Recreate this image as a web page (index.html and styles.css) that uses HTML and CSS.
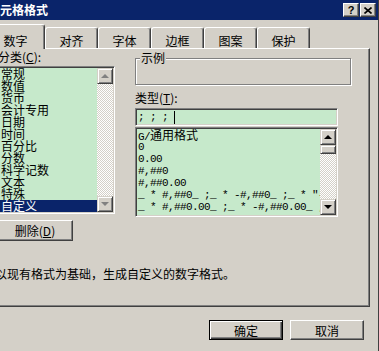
FILE: index.html
```html
<!DOCTYPE html>
<html lang="zh-CN">
<head>
    <meta charset="UTF-8">
    <title>单元格格式</title>
    <link rel="stylesheet" href="styles.css">
</head>
<body>
    <div class="dialog">
        <div class="titlebar">
            <span class="title">单元格格式</span>
            <div class="caption-btns">
                <button class="cap-btn">?</button>
                <button class="cap-btn">
                    <svg width="8" height="7" viewBox="0 0 8 7"><path d="M0.5 0.5 L7.5 6.5 M7.5 0.5 L0.5 6.5" stroke="#000" stroke-width="1.6"/></svg>
                </button>
            </div>
        </div>

        <div class="tabs">
            <div class="tab active">数字</div>
            <div class="tab">对齐</div>
            <div class="tab">字体</div>
            <div class="tab">边框</div>
            <div class="tab">图案</div>
            <div class="tab">保护</div>
        </div>

        <div class="panel">
            <div class="cols">
                <div class="col-left">
                    <div class="label">分类(<u>C</u>):</div>
                    <div class="listbox cat-list">
                        <ul class="items">
                            <li>常规</li>
                            <li>数值</li>
                            <li>货币</li>
                            <li>会计专用</li>
                            <li>日期</li>
                            <li>时间</li>
                            <li>百分比</li>
                            <li>分数</li>
                            <li>科学记数</li>
                            <li>文本</li>
                            <li>特殊</li>
                            <li class="sel">自定义</li>
                        </ul>
                        <div class="scrollbar">
                            <div class="sb-btn"><span class="arrow up"></span></div>
                            <div class="sb-track"></div>
                            <div class="sb-btn"><span class="arrow down"></span></div>
                        </div>
                    </div>
                    <button class="btn del-btn">删除(<u>D</u>)</button>
                </div>

                <div class="col-right">
                    <div class="sample">
                        <div class="sample-title">示例</div>
                    </div>
                    <div class="label-type">类型(<u>T</u>):</div>
                    <div class="textbox">; ; ; <span class="caret"></span></div>
                    <div class="listbox type-list">
                        <ul class="items mono">
                            <li>G/<span class="cjk">通用格式</span></li>
                            <li>0</li>
                            <li>0.00</li>
                            <li>#,##0</li>
                            <li>#,##0.00</li>
                            <li>_ * #,##0_ ;_ * -#,##0_ ;_ * "-"_ ;_ @_ </li>
                            <li>_ * #,##0.00_ ;_ * -#,##0.00_ ;_ * "-"??_ ;_ @_ </li>
                        </ul>
                        <div class="scrollbar">
                            <div class="sb-btn"><span class="arrow up"></span></div>
                            <div class="sb-thumb"></div>
                            <div class="sb-track"></div>
                            <div class="sb-btn"><span class="arrow down"></span></div>
                        </div>
                    </div>
                </div>
            </div>
            <p class="desc">以现有格式为基础，生成自定义的数字格式。</p>
        </div>

        <div class="actions">
            <button class="btn default">确定</button>
            <button class="btn">取消</button>
        </div>
    </div>
</body>
</html>
```

FILE: styles.css
```css
body {
    margin: 0;
    width: 379px;
    height: 351px;
    overflow: hidden;
    background: #d4d0c8;
    font-family: "Noto Sans CJK SC", "Liberation Sans", sans-serif;
    font-size: 12px;
    color: #000;
}
.dialog {
    margin-left: -14px;
    width: 393px;
    height: 351px;
    box-sizing: border-box;
    border-right: 1px solid #404040;
}
.titlebar {
    height: 20px;
    background: #0a246a;
    color: #fff;
    display: flex;
    align-items: center;
    justify-content: space-between;
    padding: 0 2px;
}
.title {
    font-weight: bold;
    line-height: 14px;
}
.caption-btns {
    display: flex;
    gap: 1px;
}
.cap-btn {
    width: 16px;
    height: 14px;
    padding: 0;
    box-sizing: border-box;
    background: #d4d0c8;
    border: 1px solid;
    border-color: #fff #404040 #404040 #fff;
    box-shadow: inset -1px -1px #808080;
    display: flex;
    align-items: center;
    justify-content: center;
    font: bold 11px "Liberation Sans", sans-serif;
    color: #000;
}
.tabs {
    display: flex;
    align-items: flex-end;
    height: 24px;
    margin-top: 4px;
}
.tab {
    width: 53px;
    height: 21px;
    box-sizing: border-box;
    border: 1px solid;
    border-color: #fff #404040 transparent #fff;
    border-bottom: 0;
    border-radius: 3px 3px 0 0;
    box-shadow: inset -1px 0 #808080;
    text-align: center;
    padding-top: 6px;
    line-height: 14px;
    background: #d4d0c8;
}
.tab.active {
    width: 59px;
    height: 25px;
    margin-bottom: -1px;
    padding-top: 9px;
    position: relative;
    z-index: 1;
}
.panel {
    margin: 0 8px 0 4px;
    height: 259px;
    box-sizing: border-box;
    border: 1px solid;
    border-color: #fff #404040 #404040 #fff;
    box-shadow: inset -1px -1px #808080;
}
.cols {
    display: flex;
    padding-left: 6px;
}
.col-left {
    width: 118px;
}
.label {
    height: 17px;
    line-height: 16px;
    padding-left: 1px;
}
.listbox {
    display: flex;
    box-sizing: border-box;
    border: 1px solid;
    border-color: #808080 #fff #fff #808080;
    box-shadow: inset 1px 1px #404040, inset -1px -1px #d4d0c8;
    padding: 1px;
    background: #c6e9cb;
}
.cat-list {
    height: 148px;
}
.items {
    flex: 1;
    list-style: none;
    margin: 0;
    padding: 0;
    overflow: hidden;
}
.items li {
    height: 12px;
    line-height: 12px;
    padding-left: 2px;
    white-space: pre;
}
.items li.sel {
    background: #0a246a;
    color: #fff;
}
.mono {
    font-family: "Liberation Mono", "Noto Sans CJK SC", monospace;
    font-size: 11px;
    letter-spacing: -0.6px;
}
.mono li {
    padding-left: 1px;
}
.cjk {
    font-family: "Noto Sans CJK SC", sans-serif;
    font-size: 12px;
    letter-spacing: 0;
}
.scrollbar {
    width: 16px;
    flex: none;
    display: flex;
    flex-direction: column;
}
.sb-btn, .sb-thumb {
    height: 16px;
    flex: none;
    box-sizing: border-box;
    border: 1px solid;
    border-color: #d4d0c8 #404040 #404040 #d4d0c8;
    box-shadow: inset 1px 1px #fff, inset -1px -1px #808080;
    background: #d4d0c8;
    display: flex;
    align-items: center;
    justify-content: center;
}
.sb-thumb {
    height: 9px;
}
.sb-track {
    flex: 1;
    background: repeating-conic-gradient(#d4d0c8 0 25%, #fff 0 50%) 0 0 / 2px 2px;
}
.arrow {
    width: 0;
    height: 0;
    border-left: 4px solid transparent;
    border-right: 4px solid transparent;
}
.arrow.up {
    border-bottom: 4px solid #000;
}
.arrow.down {
    border-top: 4px solid #000;
}
.cat-list .arrow.up {
    border-bottom-color: #808080;
}
.cat-list .arrow.down {
    border-top-color: #808080;
}
.btn {
    box-sizing: border-box;
    height: 21px;
    padding: 0;
    background: #d4d0c8;
    border: 1px solid;
    border-color: #fff #404040 #404040 #fff;
    box-shadow: inset -1px -1px #808080;
    font: 12px "Noto Sans CJK SC", "Liberation Sans", sans-serif;
    color: #000;
}
.del-btn {
    display: block;
    width: 76px;
    margin-top: 6px;
}
.col-right {
    margin-left: 20px;
    width: 216px;
}
.sample {
    margin-top: 9px;
    height: 27px;
    box-sizing: border-box;
    border: 1px solid #808080;
    box-shadow: inset 1px 1px #fff, 1px 1px #fff;
}
.sample-title {
    width: max-content;
    margin: -8px 0 0 4px;
    padding: 0 1px;
    line-height: 14px;
    background: #d4d0c8;
}
.label-type {
    margin-top: 5px;
    line-height: 15px;
}
.textbox {
    margin-top: 3px;
    width: 203px;
    height: 18px;
    box-sizing: border-box;
    border: 1px solid;
    border-color: #808080 #fff #fff #808080;
    box-shadow: inset 1px 1px #404040, inset -1px -1px #d4d0c8;
    padding: 1px 0 0 2px;
    background: #c6e9cb;
    font-family: "Liberation Mono", monospace;
    font-size: 11px;
    letter-spacing: -0.6px;
    line-height: 14px;
    white-space: pre;
}
.caret {
    display: inline-block;
    width: 1px;
    height: 13px;
    background: #000;
    vertical-align: middle;
}
.type-list {
    margin-top: 1px;
    width: 203px;
    height: 90px;
}
.desc {
    margin: 25px 0 0 4px;
    line-height: 16px;
    white-space: nowrap;
}
.actions {
    display: flex;
    justify-content: flex-end;
    gap: 7px;
    margin-top: 13px;
    padding-right: 14px;
}
.actions .btn {
    width: 74px;
    height: 20px;
}
.btn.default {
    border: 1px solid #000;
    box-shadow: inset 1px 1px #fff, inset -1px -1px #404040, inset -2px -2px #808080;
}
```
